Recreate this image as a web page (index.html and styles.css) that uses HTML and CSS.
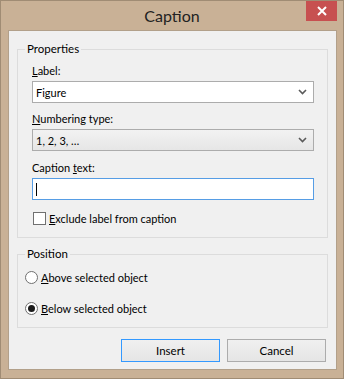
FILE: index.html
```html
<!DOCTYPE html>
<html lang="en">
<head>
  <meta charset="UTF-8" />
  <title>Caption</title>
  <link rel="stylesheet" href="styles.css">
</head>
<body>

  <div class="window">

    <!-- title bar -->
    <div class="titlebar">
      <span></span>
      <span class="title">Caption</span>
      <span class="close-btn">
        <svg width="10" height="10" viewBox="0 0 10 10">
          <path d="M1 1 L9 9 M9 1 L1 9" stroke="#fff" stroke-width="2" />
        </svg>
      </span>
    </div>

    <div class="client">

      <fieldset class="group group-props">
        <legend>Properties</legend>

        <div class="field-label"><u>L</u>abel:</div>
        <div class="combo combo-edit">
          <span>Figure</span>
          <svg class="chev" width="9" height="6" viewBox="0 0 9 6">
            <path d="M1 1 L4.5 4.5 L8 1" fill="none" stroke="#5a5a5a" stroke-width="1.6" />
          </svg>
        </div>

        <div class="field-label"><u>N</u>umbering type:</div>
        <div class="combo combo-list">
          <span>1, 2, 3, &hellip;</span>
          <svg class="chev" width="9" height="6" viewBox="0 0 9 6">
            <path d="M1 1 L4.5 4.5 L8 1" fill="none" stroke="#5a5a5a" stroke-width="1.6" />
          </svg>
        </div>

        <div class="field-label">Caption <u>t</u>ext:</div>
        <div class="textbox"><span class="caret"></span></div>

        <label class="check-row">
          <span class="checkbox"></span>
          <span><u>E</u>xclude label from caption</span>
        </label>
      </fieldset>

      <fieldset class="group group-pos">
        <legend>Position</legend>
        <label class="radio-row">
          <span class="radio"></span>
          <span><u>A</u>bove selected object</span>
        </label>
        <label class="radio-row">
          <span class="radio checked"></span>
          <span><u>B</u>elow selected object</span>
        </label>
      </fieldset>

      <div class="buttons">
        <button class="btn btn-default">Insert</button>
        <button class="btn">Cancel</button>
      </div>

    </div>
  </div>

</body>
</html>
```

FILE: styles.css
```css
* {
  box-sizing: border-box;
}
body, html {
  margin: 0;
  padding: 0;
  font-family: 'Lato', 'Liberation Sans', sans-serif;
  font-size: 11px;
  color: #000;
}
.window {
  width: 344px;
  height: 379px;
  background: #c9b196;
  border: 1px solid #a08c74;
  display: flex;
  flex-direction: column;
}
.titlebar {
  height: 29px;
  display: grid;
  grid-template-columns: 1fr auto 1fr;
  align-items: start;
}
.title {
  font-size: 16px;
  line-height: 18px;
  margin-top: 6px;
  color: #222;
}
.close-btn {
  justify-self: end;
  width: 31px;
  height: 20px;
  margin-right: 6px;
  background: #c75050;
  display: flex;
  align-items: center;
  justify-content: center;
}
.client {
  margin: 0 6px 8px 7px;
  flex: 1;
  background: #f0f0f0;
  border: 1px solid #b2a08a;
  display: flex;
  flex-direction: column;
}
.group {
  border: 1px solid #dcdcdc;
  margin: 0 8px;
  min-width: 0;
}
.group legend {
  line-height: 16px;
  padding: 0 2px;
  font-size: 11.5px;
}
.group-props {
  margin-top: 10px;
  padding: 6px 13px 11px 14px;
}
.group-props legend {
  margin-left: -7px;
}
.group-pos {
  margin-top: 8px;
  padding: 8px 13px 11px 7px;
}
.group-pos legend {
  margin-left: 0;
}
.field-label {
  line-height: 15px;
  margin-bottom: 3px;
}
.combo {
  height: 22px;
  border: 1px solid #acacac;
  display: flex;
  align-items: center;
  justify-content: space-between;
  padding: 0 6px 0 3px;
  margin-bottom: 8px;
}
.combo-edit {
  background: #fff;
}
.combo-list {
  background: linear-gradient(#f2f2f2, #e6e6e6);
  margin-bottom: 9px;
}
.textbox {
  height: 22px;
  border: 1px solid #569de5;
  background: #fff;
  padding: 4px 3px;
  margin-bottom: 11px;
}
.caret {
  display: block;
  width: 1px;
  height: 13px;
  background: #000;
}
.check-row, .radio-row {
  display: flex;
  align-items: center;
  gap: 3px;
  line-height: 15px;
}
.checkbox {
  width: 13px;
  height: 13px;
  border: 1px solid #707070;
  background: #fff;
  margin-left: 1px;
}
.radio-row + .radio-row {
  margin-top: 16px;
}
.radio {
  width: 13px;
  height: 13px;
  border: 1px solid #707070;
  border-radius: 50%;
  background: #fff;
  display: flex;
  align-items: center;
  justify-content: center;
}
.radio.checked::after {
  content: "";
  width: 7px;
  height: 7px;
  border-radius: 50%;
  background: #1a1a1a;
}
.buttons {
  display: flex;
  justify-content: flex-end;
  gap: 7px;
  margin: 11px 10px 0 0;
}
.btn {
  width: 99px;
  height: 23px;
  font-family: inherit;
  font-size: 11.5px;
  border: 1px solid #acacac;
  background: linear-gradient(#f0f0f0, #e5e5e5);
  padding: 0;
}
.btn-default {
  border-color: #3399ff;
}
```
